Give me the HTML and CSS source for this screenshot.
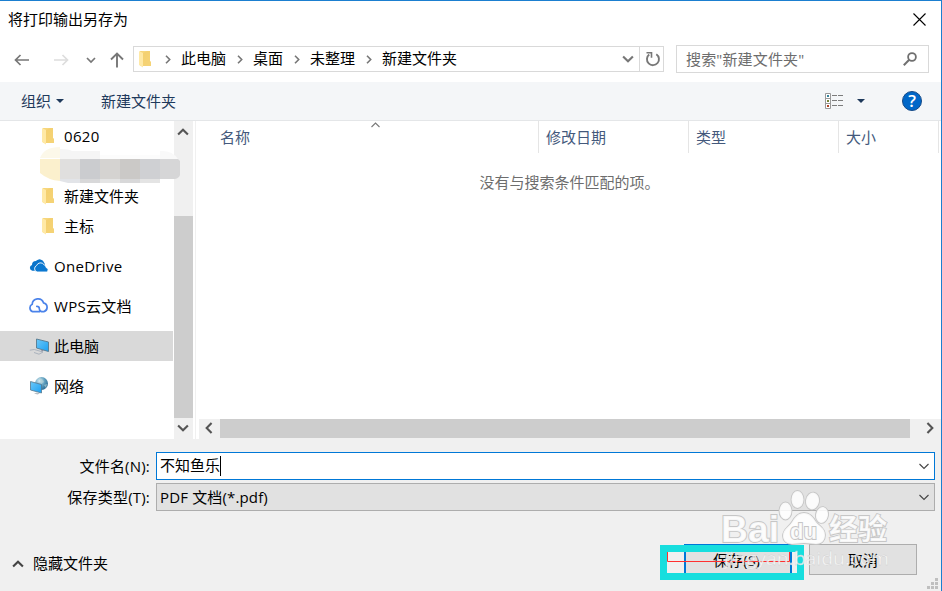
FILE: index.html
```html
<!DOCTYPE html>
<html lang="zh-CN">
<head>
<meta charset="utf-8">
<title>将打印输出另存为</title>
<link rel="stylesheet" href="styles.css">
</head>
<body>
<svg class="defs" width="0" height="0">
  <defs>
    <linearGradient id="fold" x1="0" x2="1" y1="0" y2="1"><stop offset="0" stop-color="#f6d478"/><stop offset="1" stop-color="#fbe08f"/></linearGradient>
    <linearGradient id="screen" x1="0" x2="1" y1="0" y2="1"><stop offset="0" stop-color="#6cc8f8"/><stop offset="1" stop-color="#1ba0f2"/></linearGradient>
    <radialGradient id="globe" cx=".35" cy=".3" r=".8"><stop offset="0" stop-color="#d5eaf2"/><stop offset=".5" stop-color="#5f9fbe"/><stop offset="1" stop-color="#23628c"/></radialGradient>
    <symbol id="folder" viewBox="0 0 13 18"><path d="M1 1h10v10l1 1v4H1z" fill="url(#fold)"/><path d="M4 3l4-2h3v10l1 1v4H4z" fill="#f1cb68" opacity=".6"/><path d="M0 1l4 2v14.500L0 15z" fill="#ffe9a6"/></symbol>
    <symbol id="crumb" viewBox="0 0 6 9"><path d="M1 .8l3.700 3.700L1 8.200" fill="none" stroke="#777" stroke-width="1.600"/></symbol>
    <symbol id="chev" viewBox="0 0 12 12"><path d="M1.800 3.800L6 8l4.200-4.200" fill="none" stroke="currentColor" stroke-width="1.800"/></symbol>
    <symbol id="thin" viewBox="0 0 12 12"><path d="M1.500 4L6 8.500 10.500 4" fill="none" stroke="#444" stroke-width="1.100"/></symbol>
  </defs>
</svg>
<div class="dialog">
  <header class="titlebar">
    <span>将打印输出另存为</span>
    <svg class="close" width="13" height="13" viewBox="0 0 13 13"><path d="M.5.500l12 12M12.500.500l-12 12" stroke="#000" stroke-width="1.100"/></svg>
  </header>
  <nav class="navrow">
    <div class="arrows">
      <svg width="16" height="12" viewBox="0 0 16 12"><path d="M15 6H1.500M6.500 1l-5 5 5 5" fill="none" stroke="#777" stroke-width="1.700"/></svg>
      <svg class="fwd" width="16" height="12" viewBox="0 0 16 12"><path d="M1 6h13.500M9.500 1l5 5-5 5" fill="none" stroke="#ddd" stroke-width="1.700"/></svg>
      <svg class="hist" width="10" height="8" viewBox="0 0 10 8"><path d="M1 2l4 4 4-4" fill="none" stroke="#777" stroke-width="1.700"/></svg>
      <svg class="up" width="14" height="16" viewBox="0 0 14 16"><path d="M7 15.500V2M1 7.500l6-6 6 6" fill="none" stroke="#777" stroke-width="1.900"/></svg>
    </div>
    <div class="address">
      <svg class="folder" width="13" height="18"><use href="#folder"/></svg>
      <svg class="crumb c1" width="6" height="9"><use href="#crumb"/></svg><span>此电脑</span>
      <svg class="crumb" width="6" height="9"><use href="#crumb"/></svg><span>桌面</span>
      <svg class="crumb" width="6" height="9"><use href="#crumb"/></svg><span>未整理</span>
      <svg class="crumb" width="6" height="9"><use href="#crumb"/></svg><span>新建文件夹</span>
      <svg class="drop" width="14" height="14"><use href="#chev"/></svg>
      <div class="refresh"><svg width="16" height="16" viewBox="0 0 16 16"><path d="M11.300 3.200A6 6 0 1 1 4.200 3.500" fill="none" stroke="#777" stroke-width="1.900"/><path d="M1.500 1.800h5v5" fill="none" stroke="#777" stroke-width="1.600"/></svg></div>
    </div>
    <div class="search"><span>搜索"新建文件夹"</span>
      <svg width="14" height="14" viewBox="0 0 14 14"><circle cx="9" cy="5" r="3.900" fill="none" stroke="#707070" stroke-width="1.800"/><path d="M6.200 7.800L.8 13.200" stroke="#707070" stroke-width="2"/></svg>
    </div>
  </nav>
  <div class="toolbar">
    <span>组织</span><i class="tri"></i><span class="newf">新建文件夹</span>
    <svg class="views" width="19" height="17" viewBox="0 0 19 17"><path d="M.5.500h5v15h-5zM.5 5.500h5M.5 10.500h5" fill="#fff" stroke="#999"/><path d="M7 2.500h5m1 0h5M7 7.500h5m1 0h5M7 12.500h5m1 0h5" stroke="#7c7c7c"/><path d="M2 2h2v2H2z" fill="#35849b"/><path d="M2 7h2v2H2z" fill="#788438"/><path d="M2 12h2v2H2z" fill="#b14325"/></svg>
    <i class="tri t2"></i>
    <span class="help">?</span>
  </div>
  <main class="main">
    <aside class="tree">
      <div class="item sub"><svg width="13" height="18"><use href="#folder"/></svg><span class="lat">0620</span></div>
      <div class="item masked"><svg width="142" height="36" viewBox="0 0 142 36">
        <path d="M0 11Q4 0 20 0V11z" fill="#fcf8e9"/><path d="M20 2q10 0 12 2h28v8H20z" fill="#f5f5f5"/><path d="M60 8h60v4H60z" fill="#fcfcfc"/><path d="M120 4q12-1 18 8h-18z" fill="#f9f9f9"/>
        <path d="M0 12h20v22Q8 33 0 26z" fill="#fbf0cd"/><path d="M20 12h20v20H20z" fill="#e0dfde"/><path d="M40 12h20v20H40z" fill="#cbcccf"/><path d="M60 12h20v20H60z" fill="#d5d3d1"/><path d="M80 12h20v20H80z" fill="#cbc9c7"/><path d="M100 12h20v20h-20z" fill="#cfd0d3"/><path d="M120 12h18l2 2v14q-1 3-5 4h-15z" fill="#d6d6d7"/><path d="M20 32h20v4H28l-8-2z" fill="#e2e4e8"/><path d="M40 32h20v4H40zM80 32h20v4H80z" fill="#d8d8d9"/><path d="M60 32h20v4H60zM100 32h20v4h-20z" fill="#e4e4e4"/></svg></div>
      <div class="item sub"><svg width="13" height="18"><use href="#folder"/></svg><span>新建文件夹</span></div>
      <div class="item sub"><svg width="13" height="18"><use href="#folder"/></svg><span>主标</span></div>
      <div class="item root"><svg width="20" height="20" viewBox="0 0 20 20"><path d="M3.300 14.800A3 3 0 0 1 3 9a4 4 0 0 1 4-4A4.700 4.700 0 0 1 15 6.500a4 4 0 0 1 1 3l-8 5.300z" fill="#0873ca"/><path d="M8 16a3.500 3.500 0 0 1-.4-6.500A4.200 4.200 0 0 1 15 8.700a3.500 3.500 0 0 1 2.300 3 2.200 2.200 0 0 1 .2 4.300z" fill="#0b78d0" stroke="#fff" stroke-width=".9"/></svg><span class="lat">OneDrive</span></div>
      <div class="item root"><svg class="wps" width="20" height="20" viewBox="0 0 20 20"><path d="M11.500 16.700H4.700a4 4 0 0 1-.5-7.400 5.800 5.800 0 0 1 11.300-1.500 4.600 4.600 0 0 1 .3 8.900c-3 .2-4.500-1-4.500-3.200 0-1.600-1-2.200-2.500-2.200" fill="none" stroke="#4b83ea" stroke-width="1.700" stroke-linecap="round"/></svg><span class="lat">WPS云文档</span></div>
      <div class="item root selected"><svg width="20" height="20" viewBox="0 0 20 20"><path d="M7.500 3l12 3v9.500L7.500 12z" fill="url(#screen)" stroke="#56798e" stroke-width=".9"/><path d="M12 14l2 .5-1.500 1.500" fill="none" stroke="#889"/><path d="M.8 14.200l4.500-.7L14 16l-4 2.200L5 16.500" fill="none" stroke="#aab2bd" stroke-width="1"/></svg><span>此电脑</span></div>
      <div class="item root"><svg width="20" height="20" viewBox="0 0 20 20"><circle cx="12.500" cy="7.500" r="6.500" fill="url(#globe)"/><path d="M10 2q4 1 5 4l-3 2zM15 9l3-1-1 4z" fill="#b9d5d7" opacity=".6"/><path d="M1.500 5.500l11 3v8.500l-11-3z" fill="url(#screen)" stroke="#56798e" stroke-width=".8"/><path d="M5 17.500l3-1 3 1-2.500 1z" fill="#b7bec5"/></svg><span>网络</span></div>
    </aside>
    <div class="vscroll"><svg width="14" height="14" class="flip"><use href="#chev"/></svg><div class="vthumb"></div><svg class="vd" width="14" height="14"><use href="#chev"/></svg></div>
    <section class="list">
      <div class="cols">
        <div class="col name">名称<svg class="sort" width="9" height="6" viewBox="0 0 9 6"><path d="M.5 5l4-4 4 4" fill="none" stroke="#777" stroke-width="1.100"/></svg></div>
        <div class="col w">修改日期</div><div class="col w">类型</div><div class="col last">大小</div>
      </div>
      <p class="empty">没有与搜索条件匹配的项。</p>
      <div class="hscroll"><svg class="left" width="14" height="14"><use href="#chev"/></svg><div class="hthumb"></div><svg class="right" width="14" height="14"><use href="#chev"/></svg></div>
    </section>
  </main>
  <footer class="bottom">
    <div class="field"><label>文件名(N):</label><div class="combo active"><span>不知鱼乐</span><i class="caret"></i><svg width="12" height="12"><use href="#thin"/></svg></div></div>
    <div class="field"><label>保存类型(T):</label><div class="combo"><span class="type">PDF 文档(*.pdf)</span><svg width="12" height="12"><use href="#thin"/></svg></div></div>
    <div class="actions">
      <svg class="flip" width="14" height="14"><use href="#chev"/></svg><span class="hide">隐藏文件夹</span>
      <button class="btn primary">保存(S)</button><button class="btn">取消</button>
    </div>
    <svg class="grip" width="11" height="11" viewBox="0 0 11 11"><path d="M8 0h3v3H8zM4 4h3v3H4zM8 4h3v3H8zM0 8h3v3H0zM4 8h3v3H4zM8 8h3v3H8z" fill="#bfbfbf"/></svg>
  </footer>
</div>
<svg class="overlay" width="942" height="591" viewBox="0 0 942 591">
  <path d="M667.500 552v9.500h122v-9.500" fill="none" stroke="#ff3030"/>
  <rect x="663.500" y="548.500" width="137" height="28" fill="none" stroke="#17dede" stroke-width="7"/>
  <g class="wm" fill="#fff" fill-opacity=".85" stroke="#c6c6c6" stroke-width="1.800" paint-order="stroke">
    <ellipse cx="785.500" cy="511" rx="6" ry="8.500"/><ellipse cx="797.500" cy="499.500" rx="6" ry="8.500"/><ellipse cx="812.500" cy="501" rx="6.500" ry="8.500" transform="rotate(10 812.500 501)"/><ellipse cx="822" cy="515" rx="6" ry="8" transform="rotate(10 822 515)"/>
    <path d="M804 513c-6 0-9 4-12 9s-9 7-9 14c0 5 4 8 9 8 4 0 7-1 12-1s8 1 12 1c6 0 9-4 9-9 0-7-6-9-9-13-3-5-6-9-12-9z"/>
    <text class="wmlogo" x="721" y="541.500" textLength="58" lengthAdjust="spacingAndGlyphs">Bai</text>
    <text class="wmdu" x="790" y="539" textLength="27" lengthAdjust="spacingAndGlyphs">du</text>
    <text class="wmcn" x="829" y="539.500" textLength="58" lengthAdjust="spacingAndGlyphs">经验</text>
  </g>
  <text class="wmurl" x="724" y="565" textLength="165" lengthAdjust="spacingAndGlyphs">jingyan.baidu.com</text>
</svg>
</body>
</html>
```
FILE: styles.css
```css
* { box-sizing: border-box; }
body { margin: 0; width: 942px; height: 591px; overflow: hidden; font: 15px/20px "Open Sans", "Noto Sans CJK SC", sans-serif; color: #000; }
svg { flex: none; display: block; }
.defs { position: absolute; }
.dialog { width: 942px; height: 591px; border-top: 1px solid #1b7fd0; border-right: 1px solid #1b7fd0; background: #fff; display: flex; flex-direction: column; }
.titlebar { height: 37px; display: flex; align-items: center; justify-content: space-between; padding: 0 15px 0 8px; }
.titlebar span { padding-bottom: 2px; }
.navrow { height: 44px; display: flex; padding-top: 7px; }
.arrows { width: 133px; height: 30px; display: flex; align-items: center; padding-left: 14px; }
.fwd { margin-left: 23px; }
.hist { margin-left: 17px; }
.up { margin-left: 14px; }
.address { width: 531px; height: 26px; margin-top: 1px; border: 1px solid #d9d9d9; display: flex; align-items: center; padding-left: 5px; }
.address span { position: relative; top: -1px; white-space: nowrap; }
.crumb { margin: 0 10px 0 11px; }
.crumb.c1 { margin-left: 13px; }
.drop { margin-left: auto; color: #777; }
.refresh { width: 24px; height: 24px; margin-left: 4px; border-left: 1px solid #d9d9d9; display: flex; align-items: center; justify-content: center; }
.refresh svg { position: relative; left: 1px; }
.search { margin-left: 12px; width: 253px; height: 28px; border: 1px solid #d9d9d9; display: flex; align-items: center; justify-content: space-between; padding: 0 11px 0 9px; color: #6d6d6d; }
.search span { letter-spacing: .15px; }
.toolbar { height: 39px; background: #f4f6f8; border-bottom: 1px solid #e4e6e8; display: flex; align-items: center; padding-left: 21px; color: #1e395b; }
.tri { border: 4px solid transparent; border-top-color: #1e395b; border-bottom: 0; margin-left: 5px; }
.newf { margin-left: 37px; }
.views { margin-left: 649px; }
.t2 { margin-left: 13px; }
.help { margin-left: 37px; width: 20px; height: 20px; border-radius: 50%; background: #0067c8; border: 1px solid #164a87; color: #fff; font-size: 17px; font-weight: 600; line-height: 18px; text-align: center; }
.main { height: 318px; display: flex; }
.tree { width: 174px; position: relative; z-index: 1; }
.item { height: 30px; display: flex; align-items: center; white-space: nowrap; }
.lat { letter-spacing: .3px; }
.sub { padding-left: 42px; gap: 9px; }
.masked { padding-left: 40px; }
.masked svg { margin-top: -2px; }
.root { margin-top: 10px; padding-left: 29px; gap: 5px; }
.wps { margin: -2px 1px 0 -1px; }
.selected { background: #d9d9d9; width: 173px; }
.vscroll { width: 19px; background: #f0f0f0; color: #555; display: flex; flex-direction: column; align-items: center; padding-top: 4px; }
.vscroll svg { margin-left: -1px; }
.flip { transform: rotate(180deg); }
.vthumb { width: 19px; height: 202px; margin-top: 77px; background: #cdcdcd; }
.vd { margin-top: 3px; }
.list { width: 746px; margin-left: 2px; border-left: 1px solid #f0f0f0; display: flex; flex-direction: column; }
.cols { height: 32px; display: flex; color: #44597c; line-height: 32px; }
.col { border-right: 1px solid #e5e5e5; }
.name { width: 343px; padding-left: 24px; position: relative; }
.sort { position: absolute; left: 175px; top: 1px; }
.w { width: 150px; padding-left: 7px; }
.last { width: 100px; padding-left: 7px; }
.empty { margin: 19px 0 0; width: 747px; text-align: center; color: #6d6d6d; }
.hscroll { height: 20px; margin: auto 0 0 3px; background: #f0f0f0; color: #555; display: flex; align-items: flex-start; padding-left: 3px; }
.hscroll svg { margin-top: 2px; }
.left { transform: rotate(90deg); }
.right { transform: rotate(-90deg); margin-left: 13px; }
.hthumb { width: 690px; height: 19px; margin-left: 4px; background: #cdcdcd; }
.bottom { height: 152px; background: #f0f0f0; padding-top: 13px; position: relative; }
.field { display: flex; align-items: center; height: 28px; margin-bottom: 3px; }
.field label { width: 156px; padding-right: 6px; text-align: right; letter-spacing: .2px; }
.combo { width: 779px; height: 28px; border: 1px solid #adadad; background: #e1e1e1; display: flex; align-items: center; padding: 0 4px 0 3px; }
.combo svg { margin-left: auto; }
.type { letter-spacing: .15px; }
.active { border-color: #0078d7; background: #fff; }
.active span { padding-bottom: 2px; }
.caret { width: 1px; height: 20px; background: #000; }
.actions { display: flex; align-items: center; margin-top: 33px; height: 31px; padding-left: 11px; }
.actions > .flip { color: #444; margin-top: 8px; }
.hide { margin: 6px 0 0 8px; width: 651px; }
.btn { width: 108px; height: 31px; padding: 0; background: #e1e1e1; border: 1px solid #adadad; font: inherit; color: #000; }
.primary { border: 2px solid #0078d7; margin-right: 17px; padding-right: 3px; }
.grip { position: absolute; right: 3px; bottom: 2px; }
.overlay { position: absolute; left: 0; top: 0; pointer-events: none; }
.wmlogo { font: bold 36px "Liberation Sans", sans-serif; }
.wmdu { font: bold 22px "Liberation Sans", sans-serif; }
.wmcn { font: bold 29px "Noto Sans CJK SC", sans-serif; }
.wmurl { font: 18px "Open Sans", sans-serif; fill: #fff; fill-opacity: .8; stroke: #ccc; stroke-width: .3; }
```
